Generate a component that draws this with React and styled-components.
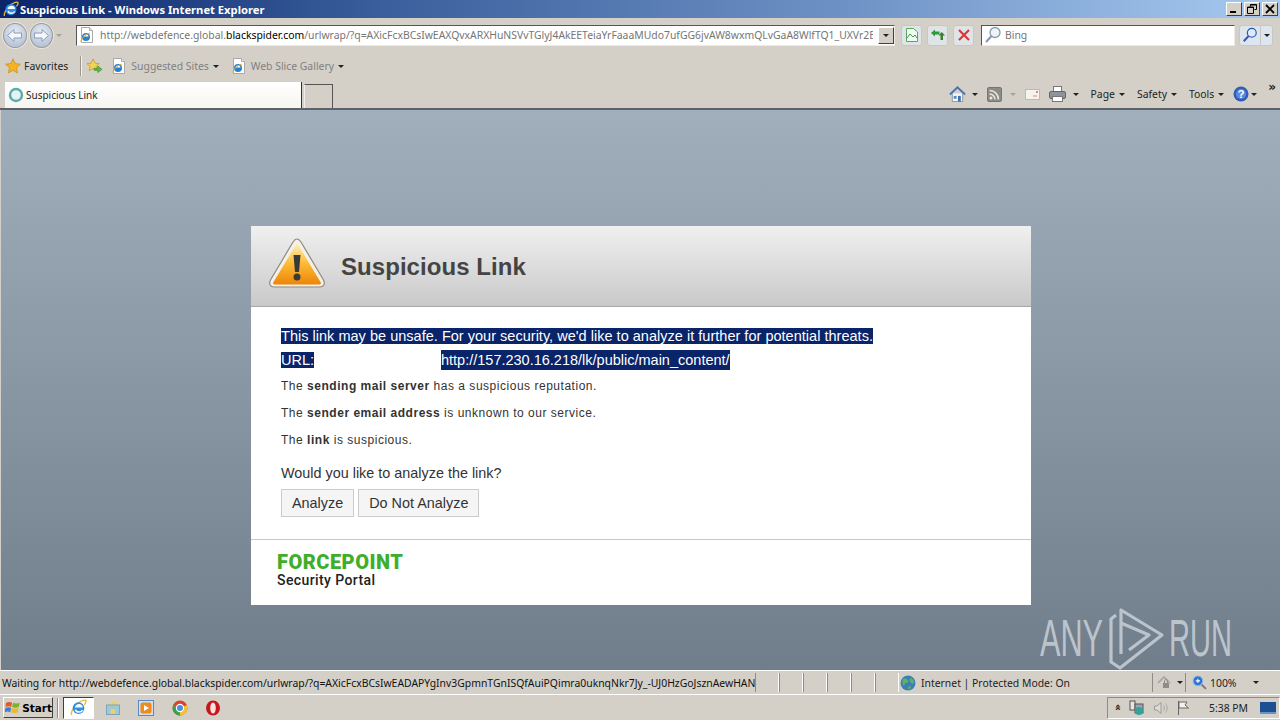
import styled, { createGlobalStyle } from "styled-components";

const GlobalStyle = createGlobalStyle`
	html, body {
		margin: 0;
		padding: 0;
		background: #d4d0c8;
	}
	* {
		box-sizing: border-box;
	}
`;

const chromeFont = `"Noto Sans", "DejaVu Sans", sans-serif`;
const pageFont = `"Liberation Sans", Arial, sans-serif`;

function IeLogo({ size = 16 }) {
	return (
		<svg width={size} height={size} viewBox="0 0 16 16">
			<path d="M1.5 15C.5 13.5 3 7 8 3.5 11 1.3 14.5.5 15 1.5c.5 1-.5 2.5-1.500 4" fill="none" stroke="#e8b93a" strokeWidth="1.3" />
			<circle cx="8" cy="8.5" r="5.5" fill="#2d8fe0" />
			<path d="M4.5 8H12c0-2-1.500-3.200-3.500-3.200S5 6 4.500 8z" fill="#fff" />
			<path d="M5 10c.6 1.600 2 2.300 3.500 2.300 1.300 0 2.500-.6 3.200-1.800" fill="none" stroke="#fff" strokeWidth="1.4" />
		</svg>
	);
}

function PageIeIcon() {
	return (
		<svg width="16" height="16" viewBox="0 0 16 16">
			<path d="M2.5.5h8l3 3v12h-11z" fill="#fff" stroke="#a9a9a9" />
			<path d="M10.5.5v3h3" fill="#eee" stroke="#a9a9a9" />
			<circle cx="7" cy="10" r="4" fill="#2d7fc8" />
			<path d="M4.500 9.500h5c0-1.200-1-2-2.500-2s-2.300.8-2.500 2z" fill="#fff" />
			<path d="M1.500 14.500C3 11 6 7.500 11 6" fill="none" stroke="#e0b030" />
		</svg>
	);
}

function NavArrow({ flip }) {
	return (
		<NavCircle>
			<svg width="17" height="15" viewBox="0 0 17 15" style={flip ? { transform: "scaleX(-1)" } : undefined}>
				<path d="M1.500 7.500 8 1.500v3.500h7.500v5H8v3.500z" fill="#f4f7fb" stroke="#8a9cba" />
			</svg>
		</NavCircle>
	);
}

function Star({ size = 16 }) {
	return (
		<svg width={size} height={size} viewBox="0 0 16 16">
			<path d="M8 .8 10.200 5.600 15.400 6.200 11.500 9.700 12.600 15 8 12.300 3.400 15 4.500 9.700.6 6.200 5.800 5.600z" fill="#f5b324" stroke="#c98a16" strokeWidth=".7" />
		</svg>
	);
}

function AddFavorite() {
	return (
		<svg width="17" height="18" viewBox="0 0 18 18">
			<path d="M7.500 1.500 9.500 6 14 6.500 10.700 9.500 11.600 14 7.500 11.700 3.400 14 4.300 9.500 1 6.500 5.500 6z" fill="#f4d25a" stroke="#c29a20" strokeWidth=".8" />
			<path d="M8.500 11.500h4V9l4.500 3.500-4.500 3.500v-2.500h-4z" fill="#5cb848" stroke="#2f8a26" strokeWidth=".6" />
		</svg>
	);
}

function Caret({ light }) {
	return <CaretShape $light={light} />;
}

function CompatIcon() {
	return (
		<svg width="16" height="16" viewBox="0 0 16 16">
			<path d="M2.500 1.500h7l4 3.500v9.500h-11z" fill="#f1faf0" stroke="#58a864" />
			<path d="M3 11 6 7l3 3 2-2 2 3" fill="none" stroke="#3d9a4d" />
		</svg>
	);
}

function RefreshIcon() {
	return (
		<svg width="16" height="16" viewBox="0 0 16 16">
			<path d="M1 6 5 2.500v2h4.500v3H5v2z" fill="#2d9a3a" />
			<path d="M15 8.500 11.800 5 8.500 8.500h2V13H13V8.500z" fill="#3b7e2e" />
		</svg>
	);
}

function CloseIcon() {
	return (
		<svg width="14" height="14" viewBox="0 0 14 14">
			<path d="M2 2l10 10M12 2 2 12" stroke="#d8393b" strokeWidth="2.2" />
		</svg>
	);
}

function SearchGlyph({ size = 18, color = "#8d9aa8", fill = "#eef3f8" }) {
	return (
		<svg width={size} height={size} viewBox="0 0 18 18">
			<circle cx="11" cy="6.5" r="5" fill={fill} stroke={color} strokeWidth="1.3" />
			<path d="M7.500 10 2 16" stroke={color} strokeWidth="2.2" />
		</svg>
	);
}

function HomeIcon() {
	return (
		<svg width="17" height="18" viewBox="0 0 18 18">
			<path d="M3.500 8.500V17h11V8.500" fill="#f6f6f6" stroke="#8a94a0" />
			<path d="M1 9.500 9 2l8 7.500" fill="none" stroke="#4474b8" strokeWidth="2" />
			<rect x="9.500" y="11" width="3" height="6" fill="#3e72b5" />
			<rect x="5" y="11" width="3" height="3" fill="#4d88c8" />
		</svg>
	);
}

function FeedIcon() {
	return (
		<svg width="15" height="15" viewBox="0 0 15 15">
			<rect x=".5" y=".5" width="14" height="14" rx="1.5" fill="#8d8d85" stroke="#77776f" />
			<circle cx="4" cy="11" r="1.5" fill="#e8e8e2" />
			<path d="M2.500 7A5.500 5.500 0 0 1 8 12.500M2.500 3.500a9 9 0 0 1 9 9" fill="none" stroke="#e8e8e2" strokeWidth="1.5" />
		</svg>
	);
}

function MailIcon() {
	return (
		<svg width="15" height="11" viewBox="0 0 15 11">
			<rect x=".5" y=".5" width="14" height="10" fill="#f6f3ef" stroke="#bdb8b0" />
			<path d="M8 7h4" stroke="#d88a80" />
			<rect x="11" y="2" width="2" height="2" fill="#d88a80" />
		</svg>
	);
}

function PrintIcon() {
	return (
		<svg width="17" height="16" viewBox="0 0 17 16">
			<rect x="4.500" y=".5" width="8" height="6" fill="#fff" stroke="#777" />
			<rect x=".5" y="5.500" width="16" height="7" rx="1.5" fill="#8d949b" stroke="#666" />
			<rect x="3.500" y="10.500" width="10" height="5" fill="#fff" stroke="#777" />
		</svg>
	);
}

function HelpIcon() {
	return (
		<svg width="16" height="16" viewBox="0 0 16 16">
			<circle cx="8" cy="8" r="7.5" fill="#2f5db8" />
			<circle cx="8" cy="8" r="5" fill="#5d8ae0" />
			<text x="8" y="12" textAnchor="middle" fontSize="11" fontWeight="700" fontFamily="Liberation Sans" fill="#fff">?</text>
		</svg>
	);
}

function TabIcon() {
	return (
		<svg width="16" height="16" viewBox="0 0 16 16">
			<circle cx="8" cy="8" r="6" fill="#e4f2f2" stroke="#5aa9ad" strokeWidth="2.4" />
		</svg>
	);
}

function WarningIcon() {
	return (
		<WarningWrap>
			<svg width="58" height="52" viewBox="0 0 58 52">
				<defs>
					<linearGradient id="warnFill" x1="0" y1="0" x2="0" y2="1">
						<stop offset="0" stopColor="#fff0c0" />
						<stop offset=".45" stopColor="#fcc03c" />
						<stop offset="1" stopColor="#ee8408" />
					</linearGradient>
				</defs>
				<path d="M29 1C27 1 26 2.500 25 4L2.500 42C0.500 46 2.500 49 6 49H52C55.500 49 57.500 46 55.500 42L33 4C32 2.500 31 1 29 1z" fill="#f4f0e8" stroke="#8f8a80" strokeWidth="1.2" />
				<path d="M29 5 5.500 44C4.500 45.500 5.500 46.500 7 46.500H51C52.500 46.500 53.500 45.500 52.500 44z" fill="url(#warnFill)" />
				<path d="M25.500 17h7L31 34h-4z" fill="#3a3a3a" />
				<circle cx="29" cy="39" r="3.5" fill="#3a3a3a" />
			</svg>
		</WarningWrap>
	);
}

function WinFlag() {
	return (
		<svg width="17" height="15" viewBox="0 0 17 15">
			<path d="M1 3c2-1.500 4-1.500 6.500-.5L6.500 7C4.500 6 3 6 .5 7z" fill="#e2592c" />
			<path d="M8.500 2.500c2.500 1 4.500 1 7 0L14.500 7c-2.500 1-4.500 1-7 0z" fill="#7cb32e" />
			<path d="M.5 8c2.500-1 4-1 6 0L5.500 12.500c-2-1-3.500-1-6 0z" fill="#3c7ed0" />
			<path d="M7.500 8c2.500 1 4.500 1 7 0l-1 4.500c-2.500 1-4.500 1-7 0z" fill="#eeb82a" />
		</svg>
	);
}

function FolderIcon() {
	return (
		<svg width="16" height="16" viewBox="0 0 16 16">
			<path d="M2 4h4l1-2h5v3H2z" fill="#e8d06a" />
			<rect x="1.500" y="5" width="13" height="9.5" fill="#9cc8dc" stroke="#7ea5ba" />
			<rect x="5.500" y="9" width="5" height="5" fill="#e8d06a" />
		</svg>
	);
}

function MediaIcon() {
	return (
		<svg width="16" height="16" viewBox="0 0 16 16">
			<rect x=".5" y=".5" width="15" height="15" fill="#cfe0f0" stroke="#5a8ac0" />
			<rect x="2.500" y="2.500" width="11" height="11" rx="2" fill="#f08a1c" />
			<path d="M6 5l5 3-5 3z" fill="#fff" />
		</svg>
	);
}

function ChromeIcon() {
	return (
		<svg width="16" height="16" viewBox="0 0 16 16">
			<circle cx="8" cy="8" r="7.5" fill="#d8432f" />
			<path d="M8 8 1.500 4.500A7.500 7.500 0 0 0 8 15.500z" fill="#3ba14a" />
			<path d="M8 8v7.500A7.500 7.500 0 0 0 15 5z" fill="#f2c230" />
			<circle cx="8" cy="8" r="3.6" fill="#4a8fe0" stroke="#fff" strokeWidth="1.2" />
		</svg>
	);
}

function OperaIcon() {
	return (
		<svg width="16" height="16" viewBox="0 0 16 16">
			<ellipse cx="8" cy="8" rx="7" ry="7.5" fill="#c9141c" />
			<ellipse cx="8" cy="8" rx="2.8" ry="5.5" fill="#f6e4dc" />
		</svg>
	);
}

function GlobeIcon() {
	return (
		<svg width="16" height="16" viewBox="0 0 16 16">
			<circle cx="8" cy="8" r="7.5" fill="#3b7fb8" />
			<path d="M3 4c2-1 4 0 5 1s0 3-2 3-1 3-2 3S1.500 7 3 4zM10 3c2 0 4 2 4 4s-2 2-3 1-2-4-1-5zM8 12c1-1 3-1 3 0s-2 3-3 2z" fill="#5fb063" />
		</svg>
	);
}

function LockIcon() {
	return (
		<svg width="16" height="15" viewBox="0 0 16 15">
			<path d="M1 8 7 2l6 6" fill="none" stroke="#a8a6a0" strokeWidth="1.6" />
			<rect x="6" y="8" width="6" height="5" fill="#8f8d88" />
			<path d="M7.500 8V6c0-2 3-2 3 0v2" fill="none" stroke="#8f8d88" />
		</svg>
	);
}

function ZoomGlyph() {
	return (
		<svg width="15" height="15" viewBox="0 0 14 14">
			<circle cx="5.5" cy="5.5" r="4.5" fill="#2f72d0" stroke="#8db4e8" />
			<path d="M3.500 5.500h4M5.500 3.500v4" stroke="#fff" />
			<path d="M9 9l4 4" stroke="#777" strokeWidth="1.8" />
		</svg>
	);
}

function TrayNetwork() {
	return (
		<svg width="16" height="16" viewBox="0 0 16 16">
			<rect x="1" y="1" width="5" height="9" fill="#e8e6e0" stroke="#555" />
			<rect x="6" y="4" width="8" height="9" fill="#9aa7b0" stroke="#555" />
			<circle cx="10" cy="11" r="4" fill="#36a39a" />
		</svg>
	);
}

function TraySpeaker() {
	return (
		<svg width="16" height="16" viewBox="0 0 16 16">
			<path d="M1.500 6H4l4-3.500v11L4 10H1.500z" fill="#dedbd4" stroke="#9a9a9a" />
			<path d="M10.500 5.500c1.200 1.500 1.200 3.500 0 5M12.500 3.500c2.200 2.500 2.200 6.500 0 9" fill="none" stroke="#a8a8a8" />
		</svg>
	);
}

function TrayFlag() {
	return (
		<svg width="14" height="16" viewBox="0 0 14 16">
			<path d="M1.500 1v14" stroke="#666" />
			<path d="M2 2h8L8 5l3.500 3H2z" fill="#f4f2ee" stroke="#666" />
		</svg>
	);
}

function ShowDesktop() {
	return (
		<svg width="16" height="14" viewBox="0 0 16 14">
			<rect width="16" height="12" y="1" fill="#1d4f93" />
			<rect width="16" height="2" y="11" fill="#6a93c5" />
		</svg>
	);
}

function RunLogo() {
	return (
		<svg width="58" height="64" viewBox="0 0 58 64">
			<path d="M9 9 4 13V56L13 62 55 29 14 4V48M14 17 42 29 22 44" fill="none" stroke="#bcc4cb" strokeWidth="3.2" strokeLinejoin="round" />
		</svg>
	);
}

function MinGlyph() {
	return (
		<svg width="10" height="10" viewBox="0 0 10 10">
			<rect x="1" y="7" width="6" height="2" fill="#000" />
		</svg>
	);
}

function RestoreGlyph() {
	return (
		<svg width="10" height="10" viewBox="0 0 10 10">
			<path d="M3.500 2.500V.5h6v5h-2M.5 3h6v6.500h-6z" fill="none" stroke="#000" />
			<path d="M.5 3.500h6M3.500 1h6" stroke="#000" />
		</svg>
	);
}

function CloseGlyph() {
	return (
		<svg width="10" height="10" viewBox="0 0 10 10">
			<path d="M1 1l8 8M9 1 1 9" stroke="#000" strokeWidth="1.8" />
		</svg>
	);
}

export default function App() {
	return (
		<>
			<GlobalStyle />
			<Desktop>
				<TitleBar>
					<IeLogo />
					<TitleText>Suspicious Link - Windows Internet Explorer</TitleText>
					<WindowButtons>
						<WindowButton><MinGlyph /></WindowButton>
						<WindowButton><RestoreGlyph /></WindowButton>
						<WindowButton><CloseGlyph /></WindowButton>
					</WindowButtons>
				</TitleBar>

				<AddressRow>
					<NavArrow />
					<NavArrow flip />
					<Caret light />
					<AddressBox>
						<PageIeIcon />
						<UrlText>
							http://webdefence.global.<strong>blackspider.com</strong>/urlwrap/?q=AXicFcxBCsIwEAXQvxARXHuNSVvTGlyJ4AkEETeiaYrFaaaMUdo7ufGG6jvAW8wxmQLvGaA8WlfTQ1_UXVr2E
						</UrlText>
						<DropButton><Caret /></DropButton>
					</AddressBox>
					<ToolButton $first><CompatIcon /></ToolButton>
					<ToolButton><RefreshIcon /></ToolButton>
					<ToolButton><CloseIcon /></ToolButton>
					<SearchBox>
						<SearchGlyph />
						<span>Bing</span>
					</SearchBox>
					<SearchButton>
						<SearchGlyph size={16} color="#2457b8" fill="#dfeaf8" />
					</SearchButton>
					<SearchMenu><Caret /></SearchMenu>
				</AddressRow>

				<FavoritesRow>
					<Star />
					<FavoritesLabel>Favorites</FavoritesLabel>
					<Divider />
					<AddFavorite />
					<FavLink>
						<PageIeIcon />
						<span>Suggested Sites</span>
						<Caret />
					</FavLink>
					<FavLink>
						<PageIeIcon />
						<span>Web Slice Gallery</span>
						<Caret />
					</FavLink>
				</FavoritesRow>

				<TabRow>
					<ActiveTab>
						<TabIcon />
						<span>Suspicious Link</span>
					</ActiveTab>
					<NewTab />
					<CommandBar>
						<CommandGroup $gap={6}><HomeIcon /><Caret /></CommandGroup>
						<CommandGroup $gap={8}><FeedIcon /><Caret light /></CommandGroup>
						<MailIcon />
						<CommandGroup $gap={7}><PrintIcon /><Caret /></CommandGroup>
						<CommandItem>Page <Caret /></CommandItem>
						<CommandItem>Safety <Caret /></CommandItem>
						<CommandItem>Tools <Caret /></CommandItem>
						<CommandGroup $gap={2}><HelpIcon /><Caret /></CommandGroup>
						<More>»</More>
					</CommandBar>
				</TabRow>

				<Viewport>
					<Card>
						<CardHeader>
							<WarningIcon />
							<CardTitle>Suspicious Link</CardTitle>
						</CardHeader>
						<CardBody>
							<Lead><Selected>This link may be unsafe. For your security, we'd like to analyze it further for potential threats.</Selected></Lead>
							<UrlLine>
								<UrlLabel><Selected>URL:</Selected></UrlLabel>
								<Selected>http://157.230.16.218/lk/public/main_content/</Selected>
							</UrlLine>
							<Reason>The <b>sending mail server</b> has a suspicious reputation.</Reason>
							<Reason>The <b>sender email address</b> is unknown to our service.</Reason>
							<Reason>The <b>link</b> is suspicious.</Reason>
							<Question>Would you like to analyze the link?</Question>
							<Actions>
								<ActionButton>Analyze</ActionButton>
								<ActionButton>Do Not Analyze</ActionButton>
							</Actions>
						</CardBody>
						<CardFooter>
							<Brand>FORCEPOINT</Brand>
							<Portal>Security Portal</Portal>
						</CardFooter>
					</Card>
					<Watermark>
						<WatermarkWord $scale={0.59}>ANY</WatermarkWord>
						<RunLogo />
						<WatermarkWord $scale={0.56}>RUN</WatermarkWord>
					</Watermark>
				</Viewport>

				<StatusBar>
					<StatusMessage>
						Waiting for http://webdefence.global.blackspider.com/urlwrap/?q=AXicFcxBCsIwEADAPYgInv3GpmnTGnISQfAuiPQimra0uknqNkr7Jy_-UJ0HzGoJsznAewHAN
					</StatusMessage>
					{[0, 1, 2, 3, 4, 5].map((i) => <StatusSlot key={i} />)}
					<ZoneCell>
						<GlobeIcon />
						<span>Internet | Protected Mode: On</span>
					</ZoneCell>
					<LockCell>
						<LockIcon />
						<Caret />
					</LockCell>
					<ZoomCell>
						<ZoomGlyph />
						<span>100%</span>
						<Caret />
					</ZoomCell>
				</StatusBar>

				<Taskbar>
					<StartButton>
						<WinFlag />
						Start
					</StartButton>
					<TaskDivider />
					<PinnedActive><IeLogo size={17} /></PinnedActive>
					<Pinned><FolderIcon /></Pinned>
					<Pinned><MediaIcon /></Pinned>
					<Pinned><ChromeIcon /></Pinned>
					<Pinned><OperaIcon /></Pinned>
					<Tray>
						<TrayMore>»</TrayMore>
						<TrayNetwork />
						<TraySpeaker />
						<TrayFlag />
						<Clock>5:38 PM</Clock>
						<ShowDesktop />
					</Tray>
				</Taskbar>
			</Desktop>
		</>
	);
}

const Desktop = styled.div`
	width: 1280px;
	height: 720px;
	overflow: hidden;
	display: flex;
	flex-direction: column;
	background: #d4d0c8;
	font-family: ${chromeFont};
	font-size: 10.4px;
	color: #222;
`;

const TitleBar = styled.div`
	height: 18px;
	flex: none;
	display: flex;
	align-items: center;
	padding: 0 2px 0 3px;
	background: linear-gradient(90deg, #0a246a 0%, #3a5f9c 30%, #6d90c4 65%, #a6caf0 100%);
`;

const TitleText = styled.div`
	margin-left: 1px;
	font-family: "Noto Sans", sans-serif;
	font-weight: 700;
	font-size: 11.2px;
	color: #fff;
`;

const WindowButtons = styled.div`
	margin-left: auto;
	display: flex;
	gap: 2px;
`;

const WindowButton = styled.div`
	width: 16px;
	height: 14px;
	display: flex;
	align-items: center;
	justify-content: center;
	background: #d4d0c8;
	border: 1px solid;
	border-color: #fff #404040 #404040 #fff;
`;

const AddressRow = styled.div`
	height: 34px;
	flex: none;
	display: flex;
	align-items: center;
	padding: 0 7px 0 3px;
`;

const NavCircle = styled.div`
	width: 25px;
	height: 25px;
	margin-right: 3px;
	border-radius: 50%;
	display: flex;
	align-items: center;
	justify-content: center;
	background: radial-gradient(circle at 50% 35%, #e4ebf4, #aab8cc);
	border: 1px solid #9a9a98;
	box-shadow: 0 0 0 1px #e9e6e0;
`;

const CaretShape = styled.i`
	display: inline-block;
	flex: none;
	width: 0;
	height: 0;
	border-left: 3px solid transparent;
	border-right: 3px solid transparent;
	border-top: 3px solid ${(p) => (p.$light ? "#a5a29c" : "#222")};
`;

const AddressBox = styled.div`
	width: 819px;
	height: 21px;
	margin-left: 14px;
	flex: none;
	display: flex;
	align-items: center;
	gap: 5px;
	padding-left: 2px;
	background: #fff;
	border: 1px solid;
	border-color: #555 #eeebe4 #eeebe4 #555;
`;

const UrlText = styled.div`
	flex: 1;
	min-width: 0;
	overflow: hidden;
	white-space: nowrap;
	color: #757575;
	& > strong {
		font-weight: 400;
		color: #000;
	}
`;

const DropButton = styled.div`
	width: 16px;
	height: 17px;
	flex: none;
	display: flex;
	align-items: center;
	justify-content: center;
	background: #d4d0c8;
	border: 1px solid;
	border-color: #fff #404040 #404040 #fff;
`;

const ToolButton = styled.div`
	width: 21px;
	height: 21px;
	margin-left: ${(p) => (p.$first ? "6px" : "5px")};
	flex: none;
	display: flex;
	align-items: center;
	justify-content: center;
	background: #dfe4e6;
	border: 1px solid #c8c8c2;
	border-radius: 3px;
`;

const SearchBox = styled.div`
	width: 254px;
	height: 21px;
	margin-left: 7px;
	flex: none;
	display: flex;
	align-items: center;
	gap: 3px;
	padding-left: 2px;
	background: #fff;
	border: 1px solid;
	border-color: #555 #eeebe4 #eeebe4 #555;
	color: #757575;
`;

const SearchButton = styled.div`
	width: 22px;
	height: 21px;
	margin-left: 4px;
	flex: none;
	display: flex;
	align-items: center;
	justify-content: center;
	background: #dde5ee;
	border: 1px solid #c8c8c2;
	border-radius: 3px 0 0 3px;
`;

const SearchMenu = styled.div`
	width: 12px;
	height: 21px;
	flex: none;
	display: flex;
	align-items: center;
	justify-content: center;
	background: #dde5ee;
	border: 1px solid #c8c8c2;
	border-left: none;
	border-radius: 0 3px 3px 0;
`;

const FavoritesRow = styled.div`
	height: 28px;
	flex: none;
	display: flex;
	align-items: center;
	padding-left: 5px;
`;

const FavoritesLabel = styled.span`
	margin-left: 3px;
	color: #222;
`;

const Divider = styled.div`
	width: 1px;
	height: 20px;
	margin: 0 5px 0 12px;
	background: #9a978f;
	box-shadow: 1px 0 0 #f3f1ec;
`;

const FavLink = styled.div`
	display: flex;
	align-items: center;
	gap: 4px;
	margin-left: 8px;
	color: #808080;
	& > i {
		margin-right: 4px;
	}
`;

const TabRow = styled.div`
	height: 30px;
	flex: none;
	display: flex;
	align-items: flex-end;
	padding-left: 5px;
	border-bottom: 2px solid #5c6268;
`;

const ActiveTab = styled.div`
	width: 297px;
	height: 26px;
	display: flex;
	align-items: center;
	gap: 2px;
	padding-left: 3px;
	font-size: 10px;
	background: linear-gradient(#fff, #f6f5f0);
	border-right: 1px solid #333;
	color: #222;
`;

const NewTab = styled.div`
	width: 29px;
	height: 24px;
	margin-left: 2px;
	border: 1px solid #555;
	border-bottom: none;
	border-left-color: #eee;
`;

const CommandBar = styled.div`
	margin-left: auto;
	height: 28px;
	display: flex;
	align-items: center;
	gap: 9px;
	padding-right: 4px;
`;

const CommandGroup = styled.div`
	display: flex;
	align-items: center;
	gap: ${(p) => p.$gap}px;
`;

const CommandItem = styled.div`
	display: flex;
	align-items: center;
	gap: 4px;
	margin-left: 3px;
`;

const More = styled.span`
	align-self: flex-start;
	margin-left: 2px;
	font: 700 12px/14px "DejaVu Sans", sans-serif;
`;

const Viewport = styled.div`
	flex: 1;
	position: relative;
	padding: 116px 0 0 250px;
	background: linear-gradient(#a1aebc, #707d8b);
	border-left: 1px solid #d4d0c8;
`;

const Card = styled.div`
	width: 780px;
	background: #fff;
	font-family: ${pageFont};
`;

const CardHeader = styled.div`
	height: 81px;
	display: flex;
	align-items: center;
	padding: 2px 0 0 17px;
	gap: 15px;
	background: linear-gradient(#f0f0f0, #c9c9c9);
	border-bottom: 1px solid #a8a8a8;
`;

const WarningWrap = styled.div`
	display: flex;
	margin-top: -6px;
`;

const CardTitle = styled.h1`
	margin: 0;
	font-size: 24px;
	font-weight: 700;
	letter-spacing: 0.05px;
	color: #444;
`;

const CardBody = styled.div`
	padding: 19px 30px 22px;
	border-bottom: 1px solid #c8c8c8;
`;

const Lead = styled.div`
	font-size: 14.5px;
	letter-spacing: 0.02px;
	line-height: 20px;
`;

const Selected = styled.span`
	background: #0a246a;
	color: #fff;
`;

const UrlLine = styled.div`
	display: flex;
	margin-top: 4px;
	font-size: 14.5px;
	line-height: 20px;
`;

const UrlLabel = styled.div`
	width: 160px;
`;

const Reason = styled.p`
	margin: 0;
	padding-top: 6px;
	height: 27px;
	font-size: 12px;
	line-height: 20px;
	letter-spacing: 0.52px;
	color: #333;
	& > b {
		font-weight: 700;
	}
`;

const Question = styled.div`
	margin-top: 12px;
	font-size: 14.4px;
	line-height: 20px;
	color: #333;
`;

const Actions = styled.div`
	display: flex;
	gap: 4px;
	margin-top: 6px;
`;

const ActionButton = styled.button`
	height: 28px;
	padding: 0 10px;
	background: #f5f5f5;
	border: 1px solid #ccc;
	font-family: ${pageFont};
	font-size: 14.4px;
	color: #333;
`;

const CardFooter = styled.div`
	height: 65px;
	padding: 12px 0 0 26px;
`;

const Brand = styled.div`
	font-family: Roboto, sans-serif;
	font-weight: 900;
	font-size: 20px;
	line-height: 20px;
	letter-spacing: 0.5px;
	color: #3fae2a;
`;

const Portal = styled.div`
	font-family: Roboto, sans-serif;
	font-weight: 500;
	font-size: 14px;
	line-height: 16px;
	letter-spacing: 0.4px;
	color: #222;
`;

const Watermark = styled.div`
	position: absolute;
	left: 1039px;
	bottom: 0;
	display: flex;
	align-items: center;
	gap: 4px;
	font-family: ${pageFont};
	font-size: 52px;
	color: #bcc4cb;
`;

const WatermarkWord = styled.span`
	display: inline-block;
	width: 63px;
	white-space: nowrap;
	transform: scaleX(${(p) => p.$scale});
	transform-origin: left center;
`;

const StatusBar = styled.div`
	height: 24px;
	flex: none;
	display: flex;
	align-items: center;
	padding: 2px 0;
	border-top: 1px solid #fff;
`;

const StatusMessage = styled.div`
	width: 755px;
	flex: none;
	overflow: hidden;
	white-space: nowrap;
	padding-left: 2px;
	color: #111;
`;

const StatusSlot = styled.div`
	width: 24px;
	height: 19px;
	flex: none;
	border-left: 1px solid #8f8c85;
	border-right: 1px solid #fff;
`;

const ZoneCell = styled.div`
	width: 253px;
	flex: none;
	display: flex;
	align-items: center;
	gap: 5px;
	padding-left: 1px;
	color: #222;
`;

const LockCell = styled.div`
	width: 34px;
	height: 19px;
	flex: none;
	display: flex;
	align-items: center;
	gap: 4px;
	padding-left: 4px;
	border-left: 1px solid #8f8c85;
	border-right: 1px solid #8f8c85;
`;

const ZoomCell = styled.div`
	flex: 1;
	display: flex;
	align-items: center;
	gap: 3px;
	padding-left: 6px;
	color: #222;
	& > i {
		margin-left: 14px;
	}
`;

const Taskbar = styled.div`
	height: 26px;
	flex: none;
	display: flex;
	align-items: center;
	padding-left: 3px;
	border-top: 1px solid #fff;
`;

const StartButton = styled.div`
	width: 50px;
	height: 21px;
	display: flex;
	align-items: center;
	gap: 1px;
	padding-left: 1px;
	font: 700 10.5px "DejaVu Sans", sans-serif;
	color: #000;
	border: 1px solid;
	border-color: #fff #404040 #404040 #fff;
`;

const TaskDivider = styled.div`
	width: 2px;
	height: 20px;
	margin: 0 4px 0 4px;
	border-left: 1px solid #8f8c85;
	border-right: 1px solid #fff;
`;

const Pinned = styled.div`
	width: 33.5px;
	height: 22px;
	flex: none;
	display: flex;
	align-items: center;
	justify-content: center;
`;

const PinnedActive = styled(Pinned)`
	width: 31px;
	margin-right: 2px;
	background: #fff;
	border: 1px solid;
	border-color: #404040 #fff #fff #404040;
`;

const Tray = styled.div`
	margin-left: auto;
	width: 173px;
	height: 22px;
	display: flex;
	align-items: center;
	gap: 8px;
	padding: 0 3px 0 6px;
	border: 1px solid;
	border-color: #8f8c85 #fff #fff #8f8c85;
`;

const TrayMore = styled.span`
	font: 700 11px "DejaVu Sans", sans-serif;
	transform: rotate(-90deg);
`;

const Clock = styled.span`
	margin-left: auto;
	margin-right: 4px;
	color: #222;
`;
